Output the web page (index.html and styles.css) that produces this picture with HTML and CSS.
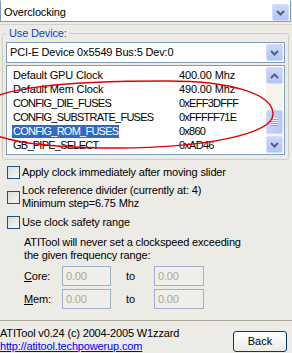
FILE: index.html
```html
<!DOCTYPE html>
<html lang="en">
<head>
    <meta charset="UTF-8">
    <meta name="viewport" content="width=device-width, initial-scale=1.0">
    <title>ATITool - Overclocking</title>
    <link rel="stylesheet" href="styles.css">
</head>
<body>
    <div class="window">
        <div class="combo combo-top">
            <span class="combo-text">Overclocking</span>
            <span class="drop-btn">
                <svg width="9" height="6" viewBox="0 0 9 6"><polyline points="1,1 4.5,4.5 8,1" fill="none" stroke="#4d6185" stroke-width="2"/></svg>
            </span>
        </div>

        <div class="panel">
            <fieldset class="group">
                <legend>Use Device:</legend>
                <div class="combo combo-device">
                    <span class="combo-text">PCI-E Device 0x5549 Bus:5 Dev:0</span>
                    <span class="drop-btn">
                        <svg width="9" height="6" viewBox="0 0 9 6"><polyline points="1,1 4.5,4.5 8,1" fill="none" stroke="#4d6185" stroke-width="2"/></svg>
                    </span>
                </div>

                <div class="list">
                    <div class="rows">
                        <div class="row"><div class="name">Default GPU Clock</div><div class="val">400.00 Mhz</div></div>
                        <div class="row"><div class="name">Default Mem Clock</div><div class="val">490.00 Mhz</div></div>
                        <div class="row"><div class="name tight">CONFIG_DIE_FUSES</div><div class="val tight">0xEFF3DFFF</div></div>
                        <div class="row"><div class="name tight">CONFIG_SUBSTRATE_FUSES</div><div class="val tight">0xFFFFF71E</div></div>
                        <div class="row"><div class="name tight"><span class="selected">CONFIG_ROM_FUSES</span></div><div class="val tight">0x860</div></div>
                        <div class="row"><div class="name tight">GB_PIPE_SELECT</div><div class="val tight">0xAD46</div></div>
                    </div>
                    <div class="scrollbar">
                        <span class="sb-btn">
                            <svg width="9" height="6" viewBox="0 0 9 6"><polyline points="1,5 4.5,1.5 8,5" fill="none" stroke="#4d6185" stroke-width="2"/></svg>
                        </span>
                        <div class="sb-track">
                            <div class="sb-thumb"><span class="grip"></span></div>
                        </div>
                        <span class="sb-btn">
                            <svg width="9" height="6" viewBox="0 0 9 6"><polyline points="1,1 4.5,4.5 8,1" fill="none" stroke="#4d6185" stroke-width="2"/></svg>
                        </span>
                    </div>
                </div>
            </fieldset>

            <div class="check check-first">
                <span class="box"></span>
                <span>Apply clock immediately after moving slider</span>
            </div>
            <div class="check check-multi">
                <span class="box"></span>
                <span>Lock reference divider (currently at: 4)<br>Minimum step=6.75 Mhz</span>
            </div>
            <div class="check check-last">
                <span class="box"></span>
                <span>Use clock safety range</span>
            </div>

            <p class="note">ATITool will never set a clockspeed exceeding<br>the given frequency range:</p>

            <div class="range range-core">
                <span class="range-label"><u>C</u>ore:</span>
                <span class="field">0.00</span>
                <span class="to">to</span>
                <span class="field field-wide">0.00</span>
            </div>
            <div class="range range-mem">
                <span class="range-label"><u>M</u>em:</span>
                <span class="field">0.00</span>
                <span class="to">to</span>
                <span class="field field-wide">0.00</span>
            </div>
        </div>

        <div class="footer">
            <div class="about">
                <div>ATITool v0.24 (c) 2004-2005 W1zzard</div>
                <a href="#">http://atitool.techpowerup.com</a>
            </div>
            <button class="back">Back</button>
        </div>

        <svg class="mark" width="292" height="353" viewBox="0 0 292 353">
            <path d="M -25 116 C -25 85, 80 81, 167 81 C 235 81, 273 95, 273 114 C 273 135, 200 148, 117 148 C 40 148, -25 140, -25 116 Z" fill="none" stroke="#e40000" stroke-width="1.4"/>
        </svg>
    </div>
</body>
</html>
```

FILE: styles.css
```css
body {
    margin: 0;
    font-family: "Liberation Sans", Arial, sans-serif;
    font-size: 11px;
    letter-spacing: -0.15px;
    color: #000;
    background: #ecebe5;
}
.window {
    position: relative;
    width: 292px;
    height: 353px;
    overflow: hidden;
}
.combo {
    display: flex;
    align-items: center;
    box-sizing: border-box;
    background: #fff;
    border: 1px solid #7f9db9;
}
.combo-text {
    flex: 1;
    line-height: 17px;
    white-space: nowrap;
}
.combo-top {
    width: 291px;
    height: 22px;
    margin-bottom: 2px;
    padding: 3px 1px 0 3px;
    align-items: flex-start;
    border-top-color: #fff;
}
.combo-device {
    height: 21px;
    padding: 0 1px 0 3px;
}
.drop-btn, .sb-btn {
    display: flex;
    align-items: center;
    justify-content: center;
    width: 17px;
    height: 17px;
    box-sizing: border-box;
    border: 1px solid #d3ddf9;
    border-radius: 2px;
    background: linear-gradient(#cbd8fb, #b3c5f3);
}
.panel {
    border-top: 1px solid #d4d3cc;
    padding: 2px 3px 0 2px;
}
.group {
    margin: 0;
    min-width: 0;
    padding: 2px 3px 4px;
    border: 1px solid #d0d0bf;
    border-radius: 3px;
}
.group legend {
    padding: 0 3px;
    line-height: 13px;
    color: #0046d5;
}
.list {
    display: flex;
    height: 90px;
    margin-top: 2px;
    box-sizing: border-box;
    padding: 1px;
    border: 1px solid #7f9db9;
    background: #fff;
}
.rows {
    flex: 1;
    padding-top: 1px;
}
.row {
    display: flex;
    align-items: flex-end;
    height: 14px;
    white-space: nowrap;
}
.name, .val {
    line-height: 13px;
}
.name {
    width: 171px;
    box-sizing: border-box;
    padding-left: 5px;
}
.tight {
    letter-spacing: -0.75px;
}
.selected {
    display: inline-block;
    margin-left: -1px;
    padding: 0 1px;
    background: #316ac5;
    color: #fff;
}
.scrollbar {
    display: flex;
    flex-direction: column;
    width: 17px;
}
.sb-track {
    flex: 1;
    background: #f5f4ef;
}
.sb-thumb {
    display: flex;
    align-items: center;
    justify-content: center;
    height: 24px;
    margin-top: 26px;
    box-sizing: border-box;
    border: 1px solid #d3ddf9;
    border-radius: 2px;
    background: linear-gradient(90deg, #c4d3fa, #b7c8f4);
}
.grip {
    width: 7px;
    height: 8px;
    background: repeating-linear-gradient(#eef2fd 0 1px, #8ea4dc 1px 2px);
}
.check {
    display: flex;
    align-items: center;
    gap: 2px;
    padding-left: 5px;
    line-height: 13px;
}
.check-first {
    margin-top: 6px;
}
.check-multi {
    margin-top: 5px;
}
.check-last {
    margin-top: 6px;
}
.box {
    flex-shrink: 0;
    width: 13px;
    height: 13px;
    box-sizing: border-box;
    border: 1px solid #1c5180;
    background: linear-gradient(135deg, #dcdcd6, #f8f8f5);
}
.note {
    margin: 7px 0 0;
    padding-left: 22px;
    line-height: 13px;
}
.range {
    display: flex;
    align-items: center;
    height: 20px;
    padding-left: 22px;
}
.range-core {
    margin-top: 4px;
}
.range-mem {
    margin-top: 3px;
}
.range-label {
    width: 38px;
}
.field {
    width: 49px;
    height: 20px;
    box-sizing: border-box;
    padding-left: 3px;
    border: 1px solid #a0b1c9;
    background: #efeee9;
    color: #aca899;
    line-height: 18px;
}
.field-wide {
    width: 50px;
}
.to {
    width: 43px;
    box-sizing: border-box;
    padding-left: 15px;
}
.footer {
    display: flex;
    justify-content: space-between;
    margin-top: 11px;
    padding-top: 6px;
    border-top: 1px solid #aca899;
    line-height: 13px;
}
.about a {
    color: #0000ff;
}
.back {
    width: 54px;
    height: 21px;
    margin: 4px 5px 0 0;
    padding: 0;
    border: 1px solid #003c74;
    border-radius: 3px;
    background: linear-gradient(#ffffff, #ecebe6);
    font: inherit;
    color: #000;
}
.mark {
    position: absolute;
    top: 0;
    left: 0;
    pointer-events: none;
}
```
